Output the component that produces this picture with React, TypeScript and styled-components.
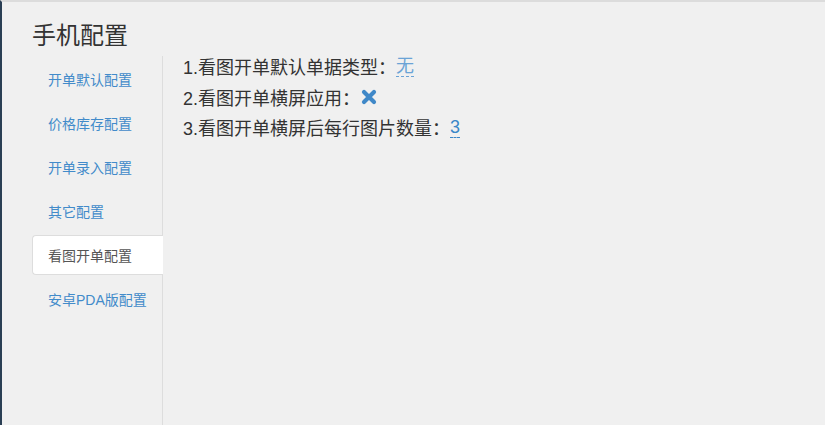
import { createGlobalStyle } from 'styled-components';
import styled from 'styled-components';

const GlobalStyle = createGlobalStyle`
  html, body { margin: 0; padding: 0; }
  body {
    background: #f0f0f0;
    font-family: 'Liberation Sans', 'Noto Sans CJK SC', sans-serif;
    color: #333;
  }
`;

const Page = styled.div`
  box-sizing: border-box;
  height: 425px;
  border-left: 2px solid #2a3f54;
  border-top: 2px solid #dcdcdc;
  padding-left: 30px;
  display: flex;
  flex-direction: column;
`;

const Title = styled.h3`
  margin: 19px 0 5px;
  font-size: 24px;
  font-weight: normal;
  line-height: 30px;
  color: #333;
`;

const Body = styled.div`
  flex: 1;
  display: flex;
`;

const Nav = styled.ul`
  list-style: none;
  margin: 0;
  padding: 3px 0 0;
  width: 130px;
  border-right: 1px solid #dddddd;
  display: flex;
  flex-direction: column;
  gap: 4px;
`;

const NavItem = styled.li<{ active?: boolean }>`
  box-sizing: border-box;
  height: 40px;
  margin-right: -1px;
  padding-left: 15px;
  display: flex;
  align-items: center;
  font-size: 14px;
  cursor: pointer;
  border-radius: 4px 0 0 4px;
  border: 1px solid ${({ active }) => (active ? '#dddddd' : 'transparent')};
  border-right: none;
  background: ${({ active }) => (active ? '#fff' : 'transparent')};
  color: ${({ active }) => (active ? '#555' : '#428bca')};
`;

const Content = styled.div`
  padding: 0 0 0 20px;
  font-size: 18px;
`;

const Line = styled.div`
  display: flex;
  align-items: center;
  height: 20px;
  margin-bottom: 10.5px;
  white-space: nowrap;
`;

const Editable = styled.span<{ muted?: boolean }>`
  color: ${({ muted }) => (muted ? '#6aa3d6' : '#3a87c8')};
  border-bottom: 1px dashed ${({ muted }) => (muted ? '#6aa3d6' : '#3a87c8')};
  line-height: 20px;
  cursor: pointer;
`;

const Cross = () => (
  <svg width='16' height='16' viewBox='0 0 16 16' style={{ marginLeft: 1 }}>
    <path d='M3 3 L13 13 M13 3 L3 13' stroke='#3f88c8' strokeWidth='4.2' strokeLinecap='round' />
  </svg>
);

const navItems = ['开单默认配置', '价格库存配置', '开单录入配置', '其它配置', '看图开单配置', '安卓PDA版配置'];

export default function App() {
  return (
    <>
      <GlobalStyle />
      <Page>
        <Title>手机配置</Title>
        <Body>
          <Nav>
            {navItems.map((t) => (
              <NavItem key={t} active={t === '看图开单配置'}>
                {t}
              </NavItem>
            ))}
          </Nav>
          <Content>
            <Line>
              1.看图开单默认单据类型：<Editable muted>无</Editable>
            </Line>
            <Line>
              2.看图开单横屏应用：<Cross />
            </Line>
            <Line>
              3.看图开单横屏后每行图片数量：<Editable>3</Editable>
            </Line>
          </Content>
        </Body>
      </Page>
    </>
  );
}
